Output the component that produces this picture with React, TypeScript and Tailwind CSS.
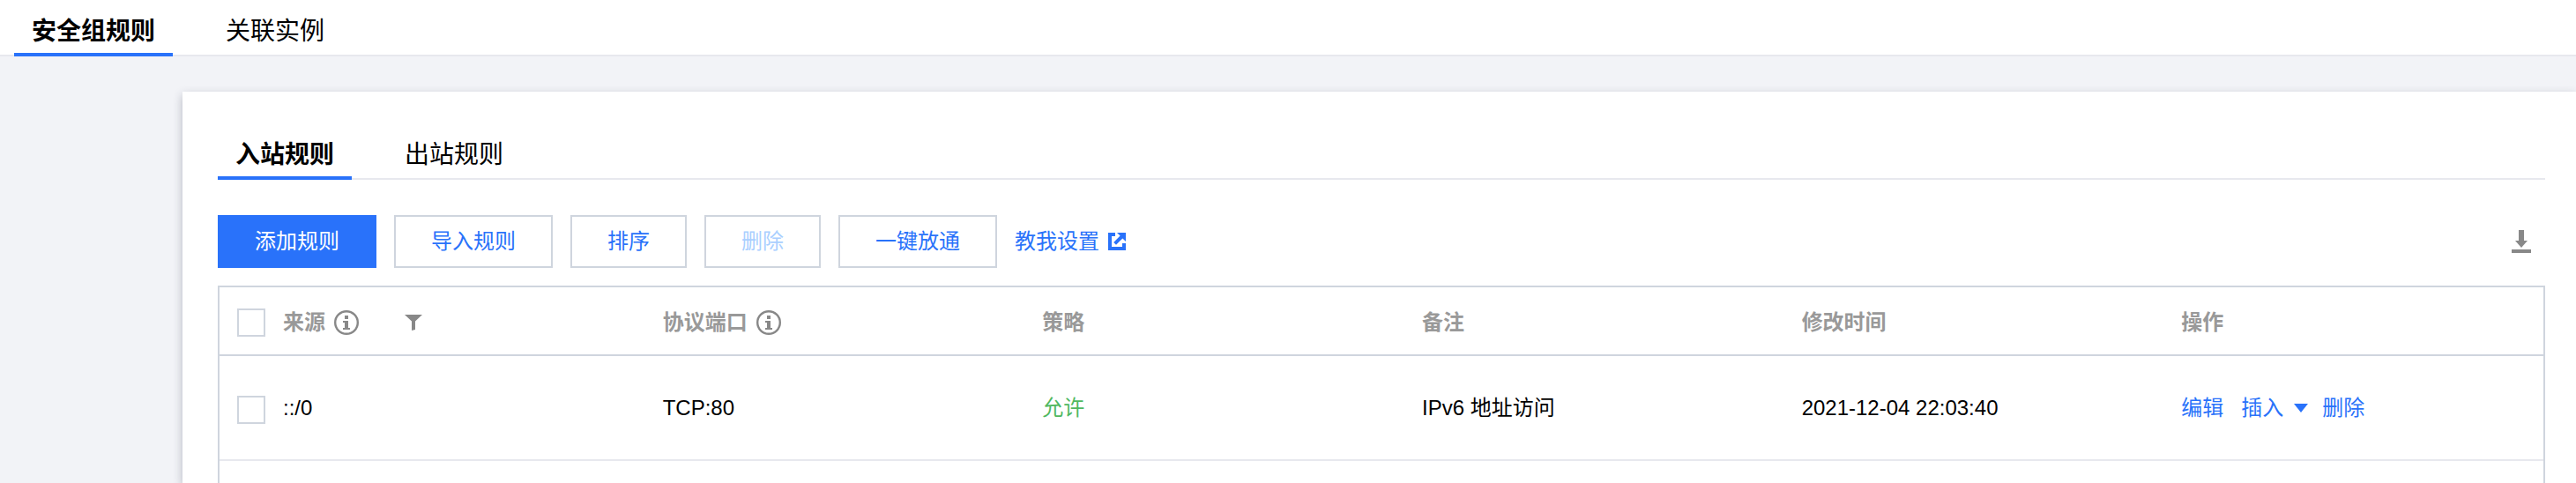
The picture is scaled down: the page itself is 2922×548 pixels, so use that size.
import { useState } from "react";
import type { ReactNode } from "react";
import { clsx } from "clsx";

interface Rule {
  id: number;
  source: string;
  port: string;
  policy: string;
  remark: string;
  modified: string;
}

const RULES: Rule[] = [
  { id: 1, source: "::/0", port: "TCP:80", policy: "允许", remark: "IPv6 地址访问", modified: "2021-12-04 22:03:40" },
];

const ACTIONS = [
  { label: "添加规则", kind: "primary" },
  { label: "导入规则", kind: "default" },
  { label: "排序", kind: "default" },
  { label: "删除", kind: "disabled" },
  { label: "一键放通", kind: "default" },
];

function InfoIcon() {
  return (
    <svg className="size-7 shrink-0" viewBox="0 0 28 28" fill="none" aria-hidden="true">
      <circle cx="14" cy="14" r="12.8" stroke="#888" strokeWidth="2.4" />
      <path d="M12 6h4v4h-4zM10 12h6v8h2v2h-8v-2h2v-6h-2z" fill="#888" />
    </svg>
  );
}

function FilterIcon() {
  return (
    <svg className="h-[18px] w-5" viewBox="0 0 20 18" aria-hidden="true">
      <path d="M0 0h20l-8 7.5V17l-4 1V7.5z" fill="#888" />
    </svg>
  );
}

function ExternalIcon() {
  return (
    <svg className="size-5" viewBox="0 0 20 20" fill="#2972fa" aria-hidden="true">
      <path d="M0 0h8v4H4v12h12v-4h4v8H0z" />
      <path d="M10 0h10v10l-3.6-3.6L9 13.8 6.2 11l7.4-7.4z" />
    </svg>
  );
}

function DownloadIcon() {
  return (
    <svg className="h-[26px] w-[22px]" viewBox="0 0 22 26" fill="#888" aria-hidden="true">
      <path d="M8 0h6v12h4l-7 8-7-8h4zM0 22h22v4H0z" />
    </svg>
  );
}

function Tab({ active, onClick, className, children }: {
  active: boolean;
  onClick: () => void;
  className: string;
  children: ReactNode;
}) {
  return (
    <button
      type="button"
      role="tab"
      aria-selected={active}
      onClick={onClick}
      className={clsx(
        "-mb-0.5 border-b-4 px-5 text-[28px] leading-10 text-black",
        active ? "border-[#2972fa] font-bold" : "border-transparent",
        className,
      )}
    >
      {children}
    </button>
  );
}

function Checkbox({ label }: { label: string }) {
  return (
    <input
      type="checkbox"
      aria-label={label}
      className="block size-8 appearance-none border-2 border-[#cfd5de] bg-white checked:border-[#2972fa] checked:bg-[#2972fa]"
    />
  );
}

export default function App() {
  const [page, setPage] = useState("安全组规则");
  const [direction, setDirection] = useState("入站规则");

  return (
    <div className="flex min-h-screen flex-col overflow-hidden bg-[#f2f3f7] font-['Liberation_Sans','Noto_Sans_CJK_SC',sans-serif] text-2xl text-black">
      {/* Page tabs */}
      <div role="tablist" className="flex gap-10 border-b-2 border-[#e7e8ee] bg-white px-4">
        {["安全组规则", "关联实例"].map(name => (
          <Tab key={name} active={page === name} onClick={() => setPage(name)} className="h-16 pt-3">
            {name}
          </Tab>
        ))}
      </div>

      <main className="mt-10 ml-[207px] flex flex-1 flex-col bg-white pt-10 pr-[35px] pl-10 shadow-[0_4px_10px_rgba(54,58,80,0.32)]">
        {/* Direction tabs */}
        <div role="tablist" className="flex gap-10 border-b-2 border-[#e7e8ee]">
          {["入站规则", "出站规则"].map(name => (
            <Tab key={name} active={direction === name} onClick={() => setDirection(name)} className="h-[60px] pt-2">
              {name}
            </Tab>
          ))}
        </div>

        {/* Toolbar */}
        <div className="mt-10 flex items-center gap-5">
          {ACTIONS.map(({ label, kind }) => (
            <button
              key={label}
              type="button"
              disabled={kind === "disabled"}
              className={clsx(
                "h-[60px] border-2 px-10 leading-9",
                kind === "primary" && "border-[#2972fa] bg-[#2972fa] text-white",
                kind === "default" && "border-[#cfd5de] bg-white text-[#2972fa]",
                kind === "disabled" && "border-[#cfd5de] bg-white text-[#a9cfff]",
              )}
            >
              {label}
            </button>
          ))}
          <a href="#guide" className="flex items-center gap-2.5 text-[#2972fa]">
            教我设置
            <ExternalIcon />
          </a>
          <button type="button" aria-label="下载" className="mr-4 ml-auto">
            <DownloadIcon />
          </button>
        </div>

        {/* Rules */}
        <div className="mt-5 flex-1 border-2 border-b-0 border-[#cfd5de]">
          <table className="w-full table-fixed border-separate border-spacing-0 text-left">
            <thead className="text-[#999]">
              <tr className="*:h-[78px] *:border-b-2 *:border-[#cfd5de] *:pt-1 *:pl-5 *:font-bold">
                <th className="w-[52px]">
                  <Checkbox label="全选" />
                </th>
                <th>
                  <div className="flex items-center">
                    来源
                    <span className="ml-2.5">
                      <InfoIcon />
                    </span>
                    <button type="button" aria-label="筛选" className="ml-[52px]">
                      <FilterIcon />
                    </button>
                  </div>
                </th>
                <th>
                  <div className="flex items-center gap-2.5">
                    协议端口
                    <InfoIcon />
                  </div>
                </th>
                <th>策略</th>
                <th>备注</th>
                <th>修改时间</th>
                <th>操作</th>
              </tr>
            </thead>
            <tbody>
              {RULES.map(rule => (
                <tr key={rule.id} className="*:h-[119px] *:border-b-2 *:border-[#e7e8ee] *:pl-5">
                  <td className="pt-1">
                    <Checkbox label={`选择 ${rule.source}`} />
                  </td>
                  <td>{rule.source}</td>
                  <td>{rule.port}</td>
                  <td className="text-[#4fb860]">{rule.policy}</td>
                  <td>{rule.remark}</td>
                  <td>{rule.modified}</td>
                  <td>
                    <div className="flex items-center text-[#2972fa]">
                      <a href="#edit">编辑</a>
                      <button type="button" className="ml-5 flex items-center gap-3">
                        插入
                        <svg className="h-2.5 w-4" viewBox="0 0 16 10" fill="currentColor" aria-hidden="true">
                          <path d="M0 0h16l-8 10z" />
                        </svg>
                      </button>
                      <a href="#delete" className="ml-4">删除</a>
                    </div>
                  </td>
                </tr>
              ))}
            </tbody>
          </table>
        </div>
      </main>
    </div>
  );
}
